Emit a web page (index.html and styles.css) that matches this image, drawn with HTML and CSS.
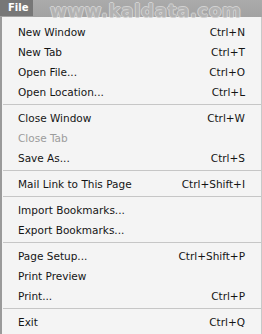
FILE: index.html
```html
<!DOCTYPE html>
<html>
<head>
<meta charset="utf-8">
<link rel="stylesheet" href="styles.css">
</head>
<body>
<div class="bar">
  <span class="file">File</span>
  <span class="mark">www.kaldata.com</span>
</div>
<div class="menu">
  <div class="item"><span>New Window</span><span>Ctrl+N</span></div>
  <div class="item"><span>New Tab</span><span>Ctrl+T</span></div>
  <div class="item"><span>Open File...</span><span>Ctrl+O</span></div>
  <div class="item"><span>Open Location...</span><span>Ctrl+L</span></div>
  <div class="sep"></div>
  <div class="item"><span>Close Window</span><span>Ctrl+W</span></div>
  <div class="item disabled"><span>Close Tab</span><span></span></div>
  <div class="item"><span>Save As...</span><span>Ctrl+S</span></div>
  <div class="sep"></div>
  <div class="item"><span>Mail Link to This Page</span><span>Ctrl+Shift+I</span></div>
  <div class="sep"></div>
  <div class="item"><span>Import Bookmarks...</span><span></span></div>
  <div class="item"><span>Export Bookmarks...</span><span></span></div>
  <div class="sep"></div>
  <div class="item"><span>Page Setup...</span><span>Ctrl+Shift+P</span></div>
  <div class="item"><span>Print Preview</span><span></span></div>
  <div class="item"><span>Print...</span><span>Ctrl+P</span></div>
  <div class="sep"></div>
  <div class="item"><span>Exit</span><span>Ctrl+Q</span></div>
</div>
</body>
</html>
```
FILE: styles.css
```css
html, body {
  margin: 0;
  padding: 0;
}
body {
  width: 262px;
  height: 334px;
  overflow: hidden;
  background: #f4f4f4;
  font-family: "DejaVu Sans", sans-serif;
  display: flex;
  flex-direction: column;
}
.bar {
  height: 17px;
  background: linear-gradient(#ababab, #a2a2a2);
  display: flex;
  align-items: flex-start;
  flex: none;
}
.file {
  width: 33px;
  height: 16px;
  background: #777777;
  color: #ffffff;
  font-weight: bold;
  font-size: 10px;
  line-height: 16px;
  padding-left: 8px;
  box-sizing: border-box;
}
.mark {
  margin-left: 17px;
  font-weight: bold;
  font-size: 18px;
  line-height: 21px;
  height: 17px;
  color: #b3b3b3;
  text-shadow: 1px 0 #d2d2d2, -1px 0 #d2d2d2, 0 1px #d2d2d2, 0 -1px #d2d2d2;
  letter-spacing: 0.75px;
  white-space: nowrap;
}
.menu {
  flex: 1;
  border-left: 2px solid #9a9a9a;
  border-right: 1px solid #c8c8c8;
  padding: 5px 0 0 0;
  display: flex;
  flex-direction: column;
}
.item {
  height: 20px;
  line-height: 20px;
  font-size: 10.5px;
  color: #141414;
  display: flex;
  justify-content: space-between;
  padding: 0 16px 0 16px;
  white-space: nowrap;
}
.item.disabled {
  color: #9c9c9c;
}
.sep {
  height: 1px;
  background: #c6c6c6;
  margin: 2px 0 3px 1px;
}
```
